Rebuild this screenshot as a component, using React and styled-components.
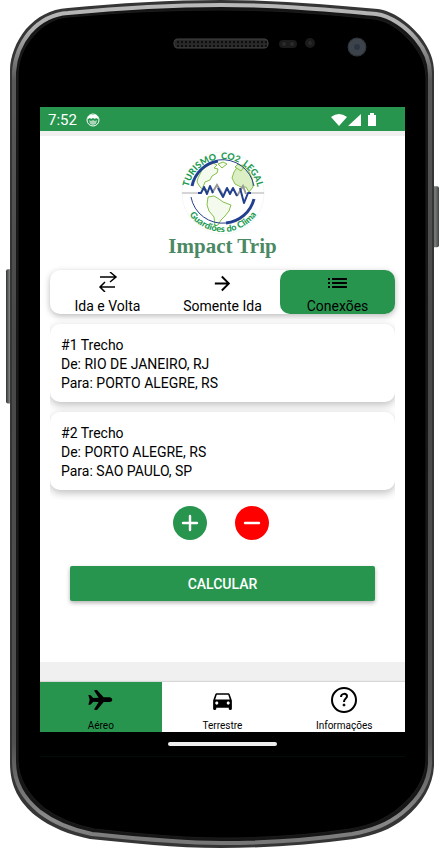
import React, { useState } from "react";
import styled, { createGlobalStyle } from "styled-components";
import { MdDirectionsCar, MdArrowForward } from "react-icons/md";

const GREEN = "#28954f";

const GlobalStyle = createGlobalStyle`
  * { box-sizing: border-box; }
  body { margin: 0; background: #fff; color: #000; font-family: Roboto, "Liberation Sans", sans-serif; }
  button { font: inherit; color: inherit; border: 0; padding: 0; cursor: pointer; }
  h1, p, ul { margin: 0; padding: 0; }
`;

const Device = styled.div`
  position: relative;
  display: flex;
  flex-direction: column;
  min-width: 320px;
  padding: 0 37px 91px 40px;
`;

const CaseDrawing = styled.svg`
  position: absolute;
  inset: 0;
  width: 100%;
  height: 100%;
`;

const Sensors = styled.div`
  height: 107px;
`;

const Screen = styled.div`
  position: relative;
  display: flex;
  flex-direction: column;
  background: #f0f0f0;
`;

const StatusBar = styled.header`
  display: flex;
  align-items: center;
  gap: 9px;
  height: 24px;
  margin-bottom: 5px;
  padding: 1px 28px 0 8px;
  background: ${GREEN};
  color: #fff;
  font-size: 15px;
`;

const StatusIcons = styled.svg`
  margin-left: auto;
`;

const Content = styled.main`
  display: flex;
  flex-direction: column;
  min-height: 526px;
  padding: 14px 10px 60px;
  background: #fff;
`;

const Brand = styled.div`
  display: flex;
  flex-direction: column;
  align-items: center;
  height: 120px;
`;

const LogoDrawing = styled.svg`
  flex: none;
  overflow: visible;
`;

const BrandName = styled.h1`
  color: #4b8964;
  font: bold 21px/20px "Liberation Serif", serif;
`;

const TripTabs = styled.div`
  display: grid;
  grid-template-columns: repeat(3, 1fr);
  height: 44px;
  border-radius: 10px;
  background: #fff;
  box-shadow: 0 2px 6px rgba(0, 0, 0, 0.28);
`;

const TripTab = styled.button`
  display: flex;
  flex-direction: column;
  align-items: center;
  justify-content: space-between;
  padding-top: 2px;
  border-radius: 10px;
  background: ${(p) => (p.$active ? GREEN : "transparent")};
  font-size: 14px;
  line-height: 16px;
`;

const Legs = styled.ul`
  display: flex;
  flex-direction: column;
  gap: 10px;
  margin-top: 6px;
  padding: 4px 0 10px;
  overflow: hidden;
  list-style: none;
`;

const Leg = styled.li`
  padding: 12px 11px 9px;
  border-radius: 10px;
  background: #fff;
  box-shadow: 0 3px 8px rgba(0, 0, 0, 0.26);
  font-size: 14px;
  line-height: 19px;
`;

const RoundButtons = styled.div`
  display: flex;
  justify-content: center;
  gap: 28px;
  margin-top: 6px;
  padding-right: 3px;
`;

const RoundButton = styled.button`
  display: grid;
  place-items: center;
  width: 34px;
  height: 34px;
  border-radius: 50%;
  background: ${(p) => p.$color};
  color: #fff;
`;

const SubmitButton = styled.button`
  height: 35px;
  margin: 26px 20px 0;
  border-radius: 2px;
  background: ${GREEN};
  color: #fff;
  font-size: 14px;
  font-weight: 500;
  box-shadow: 0 2px 4px rgba(0, 0, 0, 0.3);
`;

const BottomNav = styled.nav`
  display: grid;
  grid-template-columns: repeat(3, 1fr);
  height: 50px;
  margin-top: 20px;
  box-shadow: 0 -1px 1px rgba(0, 0, 0, 0.1);
  background: #fff;
`;

const NavButton = styled.button`
  display: flex;
  flex-direction: column;
  align-items: center;
  justify-content: space-between;
  padding-top: 4px;
  background: ${(p) => (p.$active ? GREEN : "transparent")};
  font-size: 10px;
  line-height: 13px;
`;

const NavIcon = styled.span`
  display: grid;
  place-items: center;
  height: 28px;
`;

const SystemBar = styled.div`
  display: flex;
  justify-content: center;
  height: 25px;
  padding-top: 10px;
  background: #000;
  border-bottom: 1px solid #020d07;
`;

const HomeHandle = styled.div`
  width: 30%;
  height: 4px;
  border-radius: 2px;
  background: #eee;
`;

const OUTER =
  "M10 70C10 57 16 41 26 29C37 17 50 9 68 8C120 3 170 0 221 0C280 0 330 5 378 9C394 11 410 24 420 36C430 49 434 60 434 72V765C433 785 422 803 405 817C390 829 375 834 354 838C310 844 265 847 221 847C175 847 130 842 90 838C70 834 50 826 36 815C19 801 10 785 10 762Z";
const RIM =
  "M14 72C15 57 20 44 30 32C40 21 52 14 68 13C120 8 170 5 221 5C280 5 330 10 376 14C391 16 406 27 416 39C426 51 430 62 430 74V763C429 782 418 799 402 812C388 823 374 829 352 833C310 839 265 842 221 842C175 842 130 837 92 833C72 829 53 821 40 811C23 797 14 782 14 760Z";
const INNER =
  "M18 75C18 60 24 46 34 35C43 25 54 18 68 17C120 12 170 10 221 10C280 10 330 14 374 19C389 21 402 31 412 43C422 55 426 66 426 77V760C425 778 415 794 399 807C386 818 372 824 350 828C310 834 265 837 221 837C175 837 130 832 94 828C74 824 57 817 44 807C27 793 18 778 18 758Z";

function PhoneCase() {
  return (
    <CaseDrawing viewBox="0 0 442 847" preserveAspectRatio="none" aria-hidden="true">
      <defs>
        <linearGradient id="metal" x1="0" y1="0" x2="0" y2="1">
          <stop offset="0" stopColor="#b8b8b8" />
          <stop offset="0.03" stopColor="#b0b0b0" />
          <stop offset="0.09" stopColor="#585858" />
          <stop offset="0.4" stopColor="#484848" />
          <stop offset="0.88" stopColor="#505050" />
          <stop offset="0.97" stopColor="#8a8a8a" />
          <stop offset="1" stopColor="#777" />
        </linearGradient>
        <linearGradient id="key" x1="0" y1="0" x2="1" y2="0">
          <stop offset="0" stopColor="#333" />
          <stop offset="0.5" stopColor="#7b7f7f" />
          <stop offset="1" stopColor="#444" />
        </linearGradient>
        <pattern id="mesh" width="4" height="4" patternUnits="userSpaceOnUse">
          <rect width="4" height="4" fill="#292929" />
          <circle cx="2" cy="2" r="1" fill="#000" />
        </pattern>
      </defs>
      <rect x="6" y="269" width="7" height="134" rx="2" fill="url(#key)" />
      <rect x="431" y="186" width="8" height="61" rx="2" fill="url(#key)" />
      <path d={OUTER} fill="#353535" />
      <path d={RIM} fill="#161616" stroke="url(#metal)" strokeWidth="4" />
      <path d={INNER} fill="#000" stroke="#1c1c1c" />
      <rect x="174" y="39" width="94" height="9" rx="4" fill="url(#mesh)" stroke="#444" />
      <rect x="279" y="40" width="18" height="8" rx="4" fill="#1b1b1b" />
      <circle cx="284" cy="44" r="2" fill="#2b2b2b" />
      <circle cx="292" cy="44" r="2" fill="#2b2b2b" />
      <circle cx="310" cy="43" r="5" fill="#1b1b1b" />
      <circle cx="310" cy="43" r="2" fill="#292929" />
      <circle cx="357" cy="47" r="9" fill="#3d434a" stroke="#2f3439" />
      <circle cx="357" cy="47" r="3" fill="#2b3440" />
    </CaseDrawing>
  );
}

function Logo() {
  return (
    <LogoDrawing width="104" height="86" viewBox="170 149 104 86" role="img" aria-label="Turismo CO2 Legal, Guardiões do Clima">
      <defs>
        <path id="arcTop" d="M187 193a35 35 0 0 1 70 0" />
        <path id="arcBottom" d="M181 190a41 41 0 0 0 82 0" />
      </defs>
      <circle cx="222" cy="192" r="41" fill="#fff" stroke="#f3f8f8" />
      <g fill="#f4faee" stroke="#86bf4c" strokeLinejoin="round">
        <path d="M197 177l4-8 6-5 5-2 4 2-3 3 4 1-1 4-5 3-2 4-5 2-2 5 4 3-2 1-5-4-3-5z" />
        <path d="M217 163l5-2 4 2-5 4z" />
        <path d="M207 196l6-1 5 3 4 3 8 3-2 6-4 5-4 4-3 5-3 1-1-9-5-6-2-6z" />
        <path d="M233 171l4-6 5-1 5 5 4 8 1 9-4 5-3-5-5 0-6-3-3-6z" fill="#dcefc4" />
        <path d="M234 166l3-3 6 3-3 4z" fill="#dcefc4" />
      </g>
      <g fill="none" stroke="#23408f">
        <path d="M191 185A32 32 0 0 1 217 160" strokeWidth="3" />
        <path d="M217 159A32 32 0 0 1 253 185" />
        <path d="M253 198A32 32 0 0 1 225 222" strokeWidth="3" />
        <path d="M190 196A32 32 0 0 0 225 222" />
      </g>
      <path d="M181 192h17M246 192h17" stroke="#aaa" fill="none" />
      <path d="M211 192l5-8 6 10M236 195l6-10 3 8" fill="none" stroke="#999" strokeWidth="2" />
      <path d="M197 192h3l3-6 3 7 3-8 3 7M217 187l5 9 4-9 3 6 3-6 4 8M239 187l4 15 4-10h3" fill="none" stroke="#23408f" strokeWidth="2" strokeLinejoin="round" />
      <g fontFamily="Lato, Open Sans, sans-serif" fontWeight="900" fill="#1b9a50" textAnchor="middle" fontSize="9">
        <text>
          <textPath href="#arcTop" startOffset="50%">TURISMO{"\u00a0 "}CO2{"\u00a0 "}LEGAL</textPath>
        </text>
        <text>
          <textPath href="#arcBottom" startOffset="50%">Guardiões do Clima</textPath>
        </text>
      </g>
    </LogoDrawing>
  );
}

function FaceIcon() {
  return (
    <svg width="14" height="14" viewBox="0 0 14 14" aria-hidden="true">
      <circle cx="7" cy="7" r="6" fill="none" stroke="#fff" strokeWidth="1" />
      <path d="M2 6V4l2-2h6l2 2v2l-2-1-1 1-2-1-2 1-1-1z" fill="#fff" />
      <path d="M3 7l2 1 2-1 2 1 2-1-1 4-3 1-3-1z" fill="#fff" opacity="0.6" />
    </svg>
  );
}

function RoundTripIcon() {
  return (
    <svg width="20" height="20" viewBox="0 0 20 20" fill="none" stroke="#000" strokeWidth="1.500" aria-hidden="true">
      <path d="M2 5h16M12 0l6 5-6 5M17 15H2M7 10l-5 5 5 5" />
    </svg>
  );
}

function ListIcon() {
  return (
    <svg width="20" height="20" viewBox="0 0 20 20" aria-hidden="true">
      <path d="M0 6h2v2H0zM0 10h2v2H0zM0 14h2v2H0zM4 6h15v2H4zM4 10h15v2H4zM4 14h15v2H4z" />
    </svg>
  );
}

function SignIcon({ plus }) {
  return (
    <svg width="34" height="34" viewBox="0 0 34 34" fill="none" stroke="#fff" strokeWidth="2.400" strokeLinecap="round" aria-hidden="true">
      <path d={plus ? "M10 17h14M17 10v14" : "M10 17h14"} />
    </svg>
  );
}

function PlaneIcon() {
  return (
    <svg width="25" height="22" viewBox="26 27 75 66" aria-hidden="true">
      <path d="M27 45h6l9 9 16-1-13-20q-1-3 2-3h6l20 22h19q7 2 7 7t-7 7H73L53 90h-6q-3 0-2-3l13-21-16-1-9 9h-6l4-15z" />
    </svg>
  );
}

function HelpIcon() {
  return (
    <svg width="26" height="26" viewBox="0 0 26 26" fill="none" stroke="#000" strokeWidth="2" aria-hidden="true">
      <circle cx="13" cy="13" r="12" />
      <path d="M10 10c0-4 6-4 6-1 0 3-3 2-3 6" />
      <circle cx="13" cy="18" r="1" fill="#000" strokeWidth="1" />
    </svg>
  );
}

const TABS = [
  { label: "Ida e Volta", icon: <RoundTripIcon /> },
  { label: "Somente Ida", icon: <MdArrowForward size={23} /> },
  { label: "Conexões", icon: <ListIcon /> },
];

const LEGS = [
  { from: "RIO DE JANEIRO, RJ", to: "PORTO ALEGRE, RS" },
  { from: "PORTO ALEGRE, RS", to: "SAO PAULO, SP" },
];

const SECTIONS = [
  { label: "Aéreo", icon: <PlaneIcon /> },
  { label: "Terrestre", icon: <MdDirectionsCar size={25} /> },
  { label: "Informações", icon: <HelpIcon /> },
];

export default function App() {
  const [tab, setTab] = useState("Conexões");
  const [section, setSection] = useState("Aéreo");
  return (
    <>
      <GlobalStyle />
      <Device>
        <PhoneCase />
        <Sensors />
        <Screen>
          <StatusBar>
            <span>7:52</span>
            <FaceIcon />
            <StatusIcons width="46" height="14" viewBox="0 0 46 14" fill="#fff" aria-hidden="true">
              <path d="M0 4Q8-2 16 4L8 13zM17 13L30 1v12zM37 2h2V0h4v2h2v11h-8z" />
            </StatusIcons>
          </StatusBar>
          <Content>
            <Brand>
              <Logo />
              <BrandName>Impact Trip</BrandName>
            </Brand>
            <TripTabs role="tablist">
              {TABS.map((t) => (
                <TripTab key={t.label} type="button" role="tab" aria-selected={tab === t.label} $active={tab === t.label} onClick={() => setTab(t.label)}>
                  {t.icon}
                  {t.label}
                </TripTab>
              ))}
            </TripTabs>
            <Legs>
              {LEGS.map((leg, i) => (
                <Leg key={leg.from}>
                  <p>#{i + 1} Trecho</p>
                  <p>De: {leg.from}</p>
                  <p>Para: {leg.to}</p>
                </Leg>
              ))}
            </Legs>
            <RoundButtons>
              <RoundButton type="button" $color={GREEN} aria-label="Adicionar trecho">
                <SignIcon plus />
              </RoundButton>
              <RoundButton type="button" $color="#ff0000" aria-label="Remover trecho">
                <SignIcon />
              </RoundButton>
            </RoundButtons>
            <SubmitButton type="button">CALCULAR</SubmitButton>
          </Content>
          <BottomNav>
            {SECTIONS.map((s) => (
              <NavButton key={s.label} type="button" $active={section === s.label} onClick={() => setSection(s.label)}>
                <NavIcon>{s.icon}</NavIcon>
                {s.label}
              </NavButton>
            ))}
          </BottomNav>
          <SystemBar>
            <HomeHandle />
          </SystemBar>
        </Screen>
      </Device>
    </>
  );
}
